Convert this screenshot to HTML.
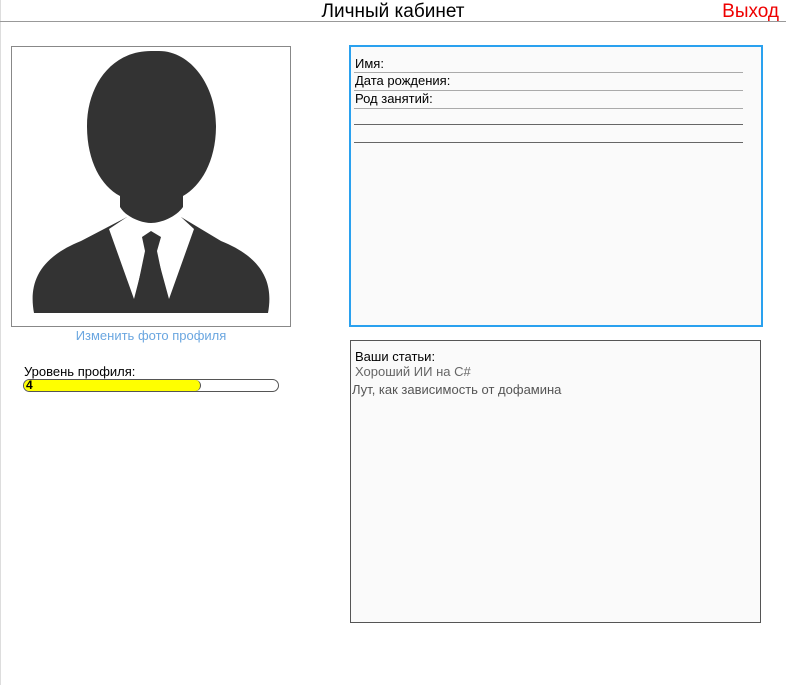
<html><head><style>
body{margin:0;width:786px;height:685px;background:#fff;font-family:"Liberation Sans",sans-serif;position:relative;overflow:hidden}
.a{position:absolute}
</style></head><body>
<div class="a" style="left:0;top:0;width:1px;height:685px;background:#ddd"></div>
<div class="a" style="left:0;top:1px;width:786px;text-align:center;font-size:19px;color:#000">Личный кабинет</div>
<div class="a" style="right:7px;top:1px;font-size:19px;color:#e00">Выход</div>
<div class="a" style="left:0;top:21px;width:786px;height:1px;background:#999"></div>
<div class="a" style="left:11px;top:46px;width:278px;height:279px;border:1px solid #888;overflow:hidden">
<svg width="278" height="279" viewBox="11 46 278 279">
<path d="M33 312 C28 285 35 258 80 240 L126 216 L180 216 L220 240 C265 258 272 285 267 312 Z" fill="#333"/>
<path d="M108 228 L133 298 L150 232 L168 298 L193 228 L180 216 L126 216 Z" fill="#fff"/>
<path d="M141 236 L150 230 L160 236 L156 250 L166 298 L134 298 L144 250 Z" fill="#333"/>
<path d="M158 50 C190 50 215 85 215 125 C215 160 200 185 182 195 L182 206 C175 216 160 222 150 222 C140 222 125 216 119 206 L119 195 C100 185 86 160 86 125 C86 85 110 50 150 50 Z" fill="#333"/>
</svg></div>
<div class="a" style="left:11px;top:328px;width:280px;text-align:center;font-size:13px;color:#6aa6e0">Изменить фото профиля</div>
<div class="a" style="left:24px;top:364px;font-size:13px">Уровень профиля:</div>
<div class="a" style="left:23px;top:379px;width:254px;height:11px;border:1px solid #555;border-radius:7px;overflow:hidden"><div style="width:177px;height:11px;background:#ff0;border-right:1px solid #555;border-radius:0 7px 7px 0;font-size:12px;font-weight:bold;line-height:11px;padding-left:2px;box-sizing:border-box">4</div></div>
<div class="a" style="left:349px;top:45px;width:410px;height:278px;border:2px solid #2aa1ef;background:#fafafa"></div>
<div class="a" style="left:355px;top:56px;font-size:13px">Имя:</div>
<div class="a" style="left:355px;top:73px;font-size:13px">Дата рождения:</div>
<div class="a" style="left:355px;top:91px;font-size:13px">Род занятий:</div>
<div class="a" style="left:354px;top:72px;width:389px;height:1px;background:#aaa"></div>
<div class="a" style="left:354px;top:90px;width:389px;height:1px;background:#aaa"></div>
<div class="a" style="left:354px;top:108px;width:389px;height:1px;background:#aaa"></div>
<div class="a" style="left:354px;top:124px;width:389px;height:1px;background:#666"></div>
<div class="a" style="left:354px;top:142px;width:389px;height:1px;background:#666"></div>
<div class="a" style="left:350px;top:340px;width:409px;height:281px;border:1px solid #555;background:#fafafa"></div>
<div class="a" style="left:355px;top:349px;font-size:13px">Ваши статьи:</div>
<div class="a" style="left:355px;top:364px;font-size:13px;color:#666">Хороший ИИ на C#</div>
<div class="a" style="left:352px;top:382px;font-size:13px;color:#555">Лут, как зависимость от дофамина</div>
</body></html>
